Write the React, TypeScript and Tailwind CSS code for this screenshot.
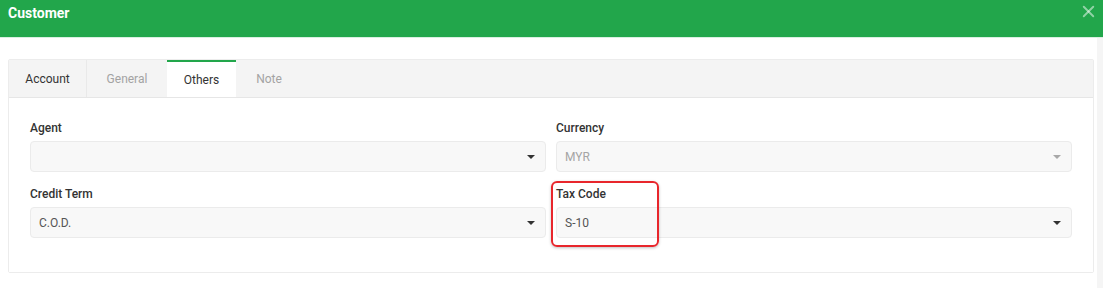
import { X } from 'lucide-react';

const tabs = [
  { name: 'Account', w: 'w-[78px]', state: 'plain' },
  { name: 'General', w: 'w-[80px]', state: 'muted' },
  { name: 'Others', w: 'w-[69px]', state: 'active' },
  { name: 'Note', w: 'w-[66px]', state: 'muted' },
];

function Caret({ light }: { light?: boolean }) {
  return (
    <svg width="8" height="4" viewBox="0 0 8 4" className="shrink-0">
      <path d="M0 0 L8 0 L4 4 Z" fill={light ? '#a8a8a8' : '#333333'} />
    </svg>
  );
}

function SelectBox({ value, disabled }: { value?: string; disabled?: boolean }) {
  return (
    <div className="h-[31px] w-full rounded-[4px] border border-[#ebebeb] bg-[#f8f8f8] flex items-center justify-between pl-[8px] pr-[10px]">
      <span className={`text-[12px] ${disabled ? 'text-[#a5a5a5]' : 'text-[#555555]'}`}>{value}</span>
      <Caret light={disabled} />
    </div>
  );
}

export default function App() {
  return (
    <div className="w-[1103px] h-[288px] bg-white flex flex-col overflow-hidden" style={{ fontFamily: 'Roboto, "Liberation Sans", sans-serif' }}>
      {/* header */}
      <div className="h-[37px] bg-[#22a64b] flex items-start justify-between pl-[8px] pr-[5px] shrink-0">
        <span className="text-white font-bold text-[14px] leading-none mt-[6px]">Customer</span>
        <X className="text-white/50 mt-[2px]" size={19} strokeWidth={2.4} />
      </div>
      <div className="h-px bg-[#d9efe0] shrink-0" />

      <div className="flex flex-1">
        <div className="flex-1 pl-[8px] pr-[3px] pt-[21px]">
          <div className="border border-[#ececec] rounded-[2px]">
            {/* tab bar */}
            <div className="h-[38px] bg-[#f4f4f4] flex border-b border-[#e6e6e6]">
              {tabs.map((t) => (
                <div
                  key={t.name}
                  className={`${t.w} h-full flex items-center justify-center text-[12px] ${
                    t.state === 'active'
                      ? 'bg-white border-t-2 border-[#22a64b] text-[#333333] -mb-px h-[39px]'
                      : t.state === 'muted'
                      ? 'text-[#a3a3a3]'
                      : 'text-[#333333] border-r border-[#e9e9e9]'
                  }`}
                >
                  {t.name}
                </div>
              ))}
            </div>

            {/* form */}
            <div className="bg-white pl-[21px] pr-[21px] pt-[24px] pb-[34px] grid grid-cols-2 gap-x-[10px] gap-y-[16px]">
              <div className="flex flex-col gap-[6px]">
                <label className="text-[12px] text-[#333333] font-medium leading-[13px]">Agent</label>
                <SelectBox />
              </div>
              <div className="flex flex-col gap-[6px]">
                <label className="text-[12px] text-[#333333] font-medium leading-[13px]">Currency</label>
                <SelectBox value="MYR" disabled />
              </div>
              <div className="flex flex-col gap-[6px]">
                <label className="text-[12px] text-[#333333] font-medium leading-[13px]">Credit Term</label>
                <SelectBox value="C.O.D." />
              </div>
              <div className="relative flex flex-col gap-[6px]">
                <label className="text-[12px] text-[#333333] font-medium leading-[13px]">Tax Code</label>
                <SelectBox value="S-10" />
                <div className="absolute left-[-5px] top-[-7px] w-[108px] h-[66px] border-2 border-[#e8262c] rounded-[6px] shadow-[0_1px_3px_rgba(0,0,0,0.25)] pointer-events-none" />
              </div>
            </div>
          </div>
        </div>
        <div className="w-[6px] bg-[#f5f5f5]" />
      </div>
    </div>
  );
}
